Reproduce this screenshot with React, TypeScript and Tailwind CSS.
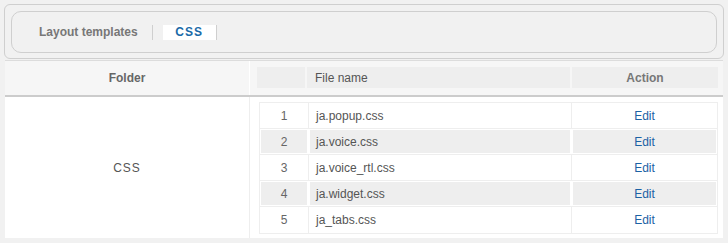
const files = ['ja.popup.css', 'ja.voice.css', 'ja.voice_rtl.css', 'ja.widget.css', 'ja_tabs.css'];

export default function App() {
  return (
    <div className="w-[728px] h-[243px] bg-[#f1f1f1] pt-[4px] font-['Liberation_Sans',Arial,sans-serif] text-[12px]">
      {/* breadcrumb box */}
      <div className="ml-[4px] w-[720px] h-[55px] border border-[#cfcfcf] rounded-[6px] p-[6px]">
        <div className="h-[42px] border border-[#cfcfcf] rounded-[10px] flex items-center pl-[27px]">
          <span className="font-bold text-[#777]">Layout templates</span>
          <span className="ml-[14px] w-px h-[15px] bg-[#cfcfcf]" />
          <span className="ml-[10px] w-[54px] h-[15px] bg-white border-r border-[#cfcfcf] flex items-center justify-center font-bold text-[#1a6aa8] tracking-[1px]">
            CSS
          </span>
        </div>
      </div>

      {/* table */}
      <div className="ml-[5px] mt-[1px] w-[718px] border-t border-[#dcdcdc]">
        <div className="flex h-[36px] bg-[#f6f6f6] border-b-2 border-[#cccccc]">
          <div className="w-[245px] border-r border-white flex items-center justify-center font-bold text-[#666]">
            Folder
          </div>
          <div className="flex-1 pl-[7px] pr-[5px] pt-[6px] pb-[7px] flex gap-[2px]">
            <div className="w-[48px] bg-[#eeeeee]" />
            <div className="w-[263px] bg-[#eeeeee] flex items-center pl-[8px] text-[#555]">File name</div>
            <div className="flex-1 bg-[#eeeeee] flex items-center justify-center font-bold text-[#777]">Action</div>
          </div>
        </div>

        <div className="flex bg-white h-[141px]">
          <div className="w-[245px] border-r border-[#eeeeee] flex items-center justify-center text-[#555] tracking-[1px]">
            CSS
          </div>
          <div className="flex-1 pl-[9px] pr-[5px] pt-[5px]">
            <div className="border border-[#eeeeee]">
              {files.map((name, i) => {
                const gray = i % 2 === 1;
                const cell = gray ? 'bg-[#eeeeee]' : 'bg-white';
                return (
                  <div
                    key={name}
                    className={`flex h-[26px] ${i < files.length - 1 ? 'border-b border-[#eeeeee]' : 'h-[25px]'}`}
                  >
                    <div className={`w-[49px] p-px border-r ${gray ? 'border-white' : 'border-[#eeeeee]'}`}>
                      <div className={`h-full ${cell} flex items-center justify-center text-[#666]`}>{i + 1}</div>
                    </div>
                    <div className={`w-[263px] p-px border-r ${gray ? 'border-white' : 'border-[#eeeeee]'}`}>
                      <div className={`h-full ${cell} flex items-center pl-[6px] text-[#555]`}>{name}</div>
                    </div>
                    <div className="flex-1 p-px">
                      <div className={`h-full ${cell} flex items-center justify-center text-[#1b62a5]`}>Edit</div>
                    </div>
                  </div>
                );
              })}
            </div>
          </div>
        </div>
      </div>
    </div>
  );
}
